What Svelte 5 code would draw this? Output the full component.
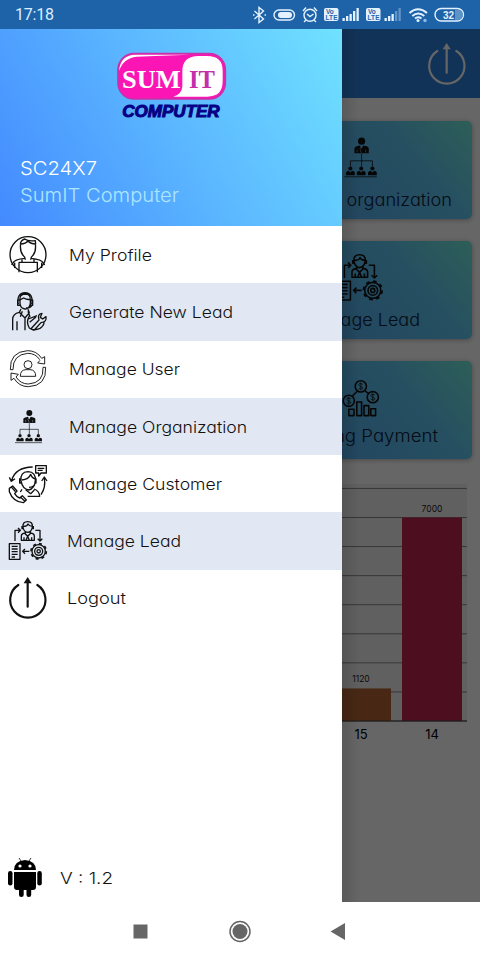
<script>
  const menu = [
    { label: "My Profile", icon: "profile", width: 83 },
    { label: "Generate New Lead", icon: "support", width: 164 },
    { label: "Manage User", icon: "user", width: 111 },
    { label: "Manage Organization", icon: "organization", width: 178 },
    { label: "Manage Customer", icon: "customer", width: 153 },
    { label: "Manage Lead", icon: "lead", width: 114 },
    { label: "Logout", icon: "power", width: 59 },
  ];

  const cards = [
    { label: "Manage organization", icon: "organization", width: 181 },
    { label: "Manage Lead", icon: "lead", width: 117 },
    { label: "Pending Payment", icon: "payment", width: 153 },
  ];

  const bars = [
    { day: "15", value: 1120, x: 331, color: "#b36435" },
    { day: "14", value: 7000, x: 402, color: "#c12552" },
  ];
  const gridLines = [0, 1000, 2000, 3000, 4000, 5000, 6000, 7000, 8000];
  const toY = (value) => 237 - (value / 7000) * 203.5;
</script>

{#snippet icon(name)}
  <svg class="icon {name}" viewBox="0 0 120 120">
    {#if name === "profile"}
      <circle cx="60" cy="59" r="54" />
      <path d="M38 26q-3 23 7 35q7 6 7 13M82 26q3 23-7 35q-7 6-7 13M37 28q1-12 13-16q10 8 32 5l1 11M37 27q17-1 23-9q8 9 23 9" />
      <path d="M33 82h55v30M33 82v30M51 70q-32 3-36 14l-4 6M69 70q32 3 37 14l4 6M42 72v10M78 72v10M20 83v16M101 83v16" />
    {:else if name === "support"}
      <path d="M36 25q-3-18 15-19q18 0 16 19v9q-2 16-16 17q-14-1-15-17zM31 37q-6-34 20-35q26 1 20 35M29 24v16h7V24zM67 24v16h7V24zM37 23l10-5q10 6 20 4M72 40q-4 9-18 8" />
      <path d="M39 51l-5 10q-20 4-20 21v33M34 61l17 17 13-16-4-10M51 78v37M27 88v27M43 58l-6 16M60 58l6 17" />
      <path d="M71 108l22-24q-6-18 9-20l-5 12 7 5 10-7q3 16-15 18l-20 22q-8 2-8-6zM64 72q-11 18 0 36q13 10 32 1q13-8 12-20M61 81l26-10M65 91l19-16" />
    {:else if name === "user"}
      <circle cx="60" cy="47" r="12" />
      <path d="M37 82q0-20 17-20h12q17 0 17 20z" />
      <path d="M7 62q-2-54 52-57q27 0 42 23M15 62q-1-45 44-49q24 0 36 19M7 62h8M101 28l9-5v22l-21-3 7-8M113 55q3 56-52 58q-28 0-43-25M105 55q3 47-44 50q-23 0-37-21M105 55h8M18 88l-9 6V72l22 4-7 8" />
    {:else if name === "organization"}
      <g class="solid">
        <circle cx="64" cy="18" r="9" />
        <path d="M46 48V36q1-5 14-7l4 8 4-8q14 2 14 7v12z" />
        {#each [36, 63, 91] as x}
          <circle cx={x} cy="86" r="5" />
          <path d="M{x - 11} 103v-7q2-4 7-4l4 4 4-4q6 0 7 4v7z" />
        {/each}
      </g>
      <path class="thin" d="M64 47v34M36 81V67h55v14M21 107h81" />
      <path class="tie" d="M63 31l-3 6 4 12M53 39v7M74 39v7" />
    {:else if name === "customer"}
      <path d="M74 9Q22 10 11 49M4 40l6 12 11-8M109 42q5 28-10 50M101 51l8-12 8 12M83 5h32v22H99l-7 9v-9h-9zM89 13h20M89 19h15" />
      <path d="M39 50q-3-26 21-27q24 1 22 27q-2 24-20 28q-19-3-23-28zM42 48q20-1 26-17q4 12 14 14M35 43v14h5M84 43v14h-3q-2 13-18 13" />
      <path d="M42 76l-5 8M78 75q16 6 17 22H59M53 77l15 12 11-11" />
      <path d="M4 73l10-7 13 15-7 8q6 10 15 13l8-7 12 13-9 8Q15 113 4 83zM11 70l11 13M38 100l12 11" />
    {:else if name === "lead"}
      <path d="M45 18q-2-16 14-16q16 0 14 16q-2 15-14 16q-12-1-14-16zM46 16q12 0 14-7 4 7 13 7M42 15v8h4M76 15v8h-4M52 31v5q-12 2-12 9v13h39V45q0-7-12-9v-5M50 37l9 9 9-9M59 46l-5 12M59 46l5 12M48 49v9M71 49v9" />
      <path d="M21 60V28h15M30 21l7 7-7 7M82 28h14v31M89 53l7 7 7-7M4 68h32v47H4zM11 76h18M11 84h18M11 92h18M11 100h18M11 108h10M64 91H44M51 84l-7 7 7 7" />
      <circle cx="92" cy="91" r="12" />
      <circle cx="92" cy="91" r="5" />
      <circle cx="92" cy="91" r="20" />
      <circle class="teeth" cx="92" cy="91" r="23" />
    {:else if name === "payment"}
      <circle cx="62" cy="31" r="14" />
      <circle cx="32" cy="67" r="14" />
      <circle cx="92" cy="58" r="14" />
      <path d="M53 43L41 55M72 42l10 7M32 104V88h13v16zM52 104V70h12v34zM70 104V79h12v25zM87 104V87h12v17z" />
      <path class="thin" d="M67 26q-10-5-10 1 0 3 5 4 6 2 5 5-2 4-10 0M62 21v20M37 62q-10-5-10 1 0 3 5 4 6 2 5 5-2 4-10 0M32 57v20M97 53q-10-5-10 1 0 3 5 4 6 2 5 5-2 4-10 0M92 48v20" />
    {:else if name === "power"}
      <path class="bold" d="M31 21a53 53 0 1 0 57 0M59 86V12" />
      <path class="solid" d="M59-3L71 16H47z" />
    {/if}
  </svg>
{/snippet}

{#snippet label(text, width)}
  <svg class="label" {width} height="24">
    <text x="0" y="18" textLength={width} lengthAdjust="spacingAndGlyphs">{text}</text>
  </svg>
{/snippet}

<div class="phone">
  <header class="status">
    <span class="time">17:18</span>
    <svg class="tray" viewBox="240 0 240 29">
      <g fill="none" stroke="#e4f2ff" stroke-width="1.4">
        <path d="M254.5 11l9 8-4.500 3.500v-15l4.500 3.500-9 8M253 15h1.500M264.500 15h1.500" />
        <rect x="274" y="10" width="20.500" height="10" rx="5" />
        <circle cx="310" cy="15.300" r="6" />
        <path d="M307 14l3 2.500 3.500-2.500M303 11l3-3.500M317 11l-3-3.500M306 20l-2 2M314 20l2 2" />
        <rect x="435" y="8.500" width="28.500" height="12.500" rx="6.200" />
      </g>
      <rect x="278" y="12" width="14" height="6" rx="3" fill="#e4f2ff" />
      <path d="M455 10h3a5 5 0 0 1 0 10h-3z" fill="#5d93c7" />
      {#each [324, 366] as x}
        <rect {x} y="8" width="14.500" height="13" rx="2" fill="#e4f2ff" />
        <text class="volte" x={x + 2} y="14">Vo</text>
        <text class="volte" x={x + 1.5} y="20.300" textLength="12">LTE</text>
        {#each [3, 5, 7, 10, 13] as h, i}
          <rect x={x + 18.5 + i * 3.5} y={21 - h} width="2.300" height={h} fill="#e4f2ff" opacity={x > 350 && i > 2 ? 0.35 : 1} />
        {/each}
      {/each}
      <g fill="none" stroke="#e4f2ff" stroke-width="2">
        <path d="M409.500 13q8.500-7.500 17.500 0M412.300 16q6-5 12 0M415 18.500q3-2.500 6.500 0" />
      </g>
      <circle cx="418" cy="20.500" r="1.500" fill="#e4f2ff" />
      <circle cx="425" cy="20.500" r="1.700" fill="#8dbbe6" />
      <text class="battery" x="443" y="18.700">32</text>
    </svg>
  </header>

  <main class="screen">
    <div class="page">
      <div class="appbar">{@render icon("power")}</div>
      <div class="cards">
        {#each cards as card}
          <div class="card {card.icon}-card">
            {@render icon(card.icon)}
            {@render label(card.label, card.width)}
          </div>
        {/each}
      </div>
      <svg class="chart" viewBox="0 0 480 276">
        <rect x="12" y="0" width="455" height="237" fill="#f0f0f0" />
        {#each gridLines as line}
          <path class="grid" d="M12 {toY(line)}H467" />
        {/each}
        {#each bars as bar}
          <rect x={bar.x} y={toY(bar.value)} width="60" height={237 - toY(bar.value)} fill={bar.color} />
          <text class="value" x={bar.x + 30} y={toY(bar.value) - 6}>{bar.value}</text>
          <text class="day" x={bar.x + 30} y="255">{bar.day}</text>
        {/each}
        <path class="grid axis" d="M12 237H467" />
      </svg>
    </div>

    <div class="scrim"></div>

    <aside class="drawer">
      <div class="profile-head">
        <svg class="logo" viewBox="348 152 336 204">
          <rect x="354" y="160" width="322" height="136" rx="48" fill="#fb15b4" stroke="#c930a9" stroke-width="5" />
          <path d="M596 167h26q46 0 46 44v32q0 46-46 46H520q25-8 27-30v-46q0-46 49-46z" fill="#fff" />
          <path d="M357 212q4-48 48-49h165q-90 3-160 6-40 4-53 43z" fill="#fff" />
          <text class="sum" x="366" y="262" textLength="176" lengthAdjust="spacingAndGlyphs">SUM</text>
          <text class="it" x="567" y="262" textLength="78" lengthAdjust="spacingAndGlyphs">IT</text>
          <text class="computer" x="367" y="349" textLength="292" lengthAdjust="spacingAndGlyphs">COMPUTER</text>
        </svg>
        <div class="account">
          <svg width="200" height="27">
            <text x="0" y="20" textLength="77" lengthAdjust="spacingAndGlyphs">SC24X7</text>
          </svg>
          <svg class="company" width="200" height="27">
            <text x="0" y="20" textLength="159" lengthAdjust="spacingAndGlyphs">SumIT Computer</text>
          </svg>
        </div>
      </div>

      <nav>
        {#each menu as item, i}
          <div class="item" class:shaded={i % 2 === 1} class:tight={i > 4}>
            {@render icon(item.icon)}
            {@render label(item.label, item.width)}
          </div>
        {/each}
      </nav>

      <footer class="version">
        <svg class="android" viewBox="0 0 36 40">
          <path d="M7 12q0-9 11-10q11 1 11 10zM7 14h22v15q0 3-3 3H10q-3 0-3-3z" />
          <rect x="1" y="13" width="4.500" height="14.500" rx="2.200" />
          <rect x="30.300" y="13" width="4.500" height="14.500" rx="2.200" />
          <rect x="12" y="28" width="4.700" height="11" rx="2.300" />
          <rect x="19.500" y="28" width="4.700" height="11" rx="2.300" />
          <path d="M14 3L12 0M22 3l2-3" stroke="#000" stroke-width=".8" />
          <circle cx="13" cy="8" r="1.600" fill="#fff" />
          <circle cx="23" cy="8" r="1.600" fill="#fff" />
        </svg>
        {@render label("V : 1.2", 53)}
      </footer>
    </aside>
  </main>

  <div class="navbar">
    <svg viewBox="0 0 480 58">
      <rect x="133.500" y="22.500" width="14" height="14" />
      <circle cx="240" cy="29.500" r="10" fill="none" stroke="#666" stroke-width="1.500" />
      <circle cx="240" cy="29.500" r="7.500" />
      <path d="M330.500 29.500L345 21v17z" />
    </svg>
  </div>
</div>

<style>
  :global(body) {
    background: #fff;
  }
  .phone {
    display: flex;
    flex-direction: column;
    width: 480px;
    height: 960px;
    overflow: hidden;
    font-family: Inter, Lato, sans-serif;
    font-feature-settings: "cv11";
    background: #fff;
  }
  svg {
    display: block;
    flex: none;
  }

  .status {
    display: flex;
    justify-content: space-between;
    align-items: center;
    height: 29px;
    padding-left: 15px;
    background: #1e63a8;
    color: #d9eeff;
  }
  .time {
    font-family: Roboto, sans-serif;
    font-size: 16px;
    letter-spacing: -0.2px;
  }
  .tray {
    width: 240px;
    height: 29px;
  }
  .volte {
    font: bold 6.5px "Liberation Sans", sans-serif;
    fill: #1e63a8;
  }
  .battery {
    font: bold 10px "Liberation Sans", sans-serif;
    fill: #e4f2ff;
  }

  .screen {
    position: relative;
    height: 873px;
    overflow: hidden;
  }
  .page {
    height: 100%;
    background: #fff;
  }
  .appbar {
    display: flex;
    justify-content: flex-end;
    align-items: center;
    height: 69px;
    padding-right: 13px;
    background: #2d7fdd;
  }
  .cards {
    display: grid;
    gap: 22px;
    padding: 23px 8px 0 251px;
  }
  .card {
    display: flex;
    flex-direction: column;
    align-items: center;
    gap: 6px;
    height: 98px;
    padding-top: 13px;
    box-sizing: border-box;
    border-radius: 5px;
    background: linear-gradient(50deg, #4fa0f0, #5fc6f2 70%, #72ecdc);
    box-shadow: 0 1px 5px rgb(0 0 0 / 30%);
  }
  .payment-card {
    gap: 2px;
  }
  .chart {
    width: 480px;
    height: 276px;
    margin-top: 25px;
  }
  .grid {
    stroke: #888;
    stroke-width: 1;
  }
  .axis {
    stroke: #444;
  }
  .value {
    font-size: 8.5px;
    text-anchor: middle;
    fill: #222;
  }
  .day {
    font-size: 13px;
    text-anchor: middle;
  }
  .scrim {
    position: absolute;
    inset: 0;
    background:
      linear-gradient(90deg, rgb(0 0 0 / 12%), transparent 18px) 342px 0 no-repeat,
      rgb(0 0 0 / 60%);
  }

  .drawer {
    position: absolute;
    top: 0;
    left: 0;
    display: flex;
    flex-direction: column;
    width: 342px;
    height: 100%;
    background: #fff;
  }
  .profile-head {
    height: 197px;
    box-sizing: border-box;
    padding-top: 22px;
    background: linear-gradient(60deg, #438aff, #5bb6ff 50%, #70e2ff);
  }
  .logo {
    width: 112px;
    height: 68px;
    margin-left: 116px;
    overflow: visible;
  }
  .sum,
  .it {
    font: bold 75px "Liberation Serif", serif;
    fill: #fff;
  }
  .it {
    fill: #c42faa;
  }
  .computer {
    font: italic bold 49px "Liberation Sans", sans-serif;
    fill: #070085;
    stroke: #070085;
    stroke-width: 3;
  }
  .account {
    padding: 36px 0 0 20px;
    font-size: 19px;
    font-weight: 300;
    fill: #fff;
  }
  .company {
    fill: #aee6ff;
  }

  .item {
    display: flex;
    align-items: center;
    gap: 21px;
    height: 57.3px;
    padding-left: 8px;
    box-sizing: border-box;
  }
  .item.shaded {
    background: #e1e8f3;
  }
  .item.tight {
    gap: 19px;
  }
  .label {
    font-size: 16px;
    font-weight: 300;
    fill: #111;
    overflow: visible;
  }
  .card .label {
    font-size: 17px;
    fill: #0a1c3c;
  }

  .icon {
    width: 40px;
    height: 40px;
    overflow: visible;
    fill: none;
    stroke: #111;
    stroke-width: 4;
    stroke-linejoin: round;
  }
  .card .icon {
    width: 48px;
    height: 48px;
    margin-right: 4px;
  }
  .icon.user {
    stroke-width: 2.8;
  }
  .icon .solid {
    fill: #111;
    stroke: none;
  }
  .icon .thin {
    stroke-width: 2;
  }
  .icon .tie {
    stroke: #9aabbd;
    stroke-width: 1.5;
  }
  .icon .teeth {
    stroke-width: 5;
    stroke-dasharray: 9 9.06;
  }
  .icon .bold {
    stroke-width: 6.5;
    stroke-linecap: round;
  }
  .appbar .icon {
    stroke: #fff;
  }
  .appbar .icon .solid {
    fill: #fff;
  }

  .version {
    display: flex;
    align-items: center;
    gap: 17px;
    margin-top: auto;
    padding: 0 0 4px 7px;
  }
  .android {
    width: 36px;
    height: 40px;
    overflow: visible;
  }
  .navbar svg {
    width: 480px;
    height: 58px;
    fill: #666;
  }
</style>
